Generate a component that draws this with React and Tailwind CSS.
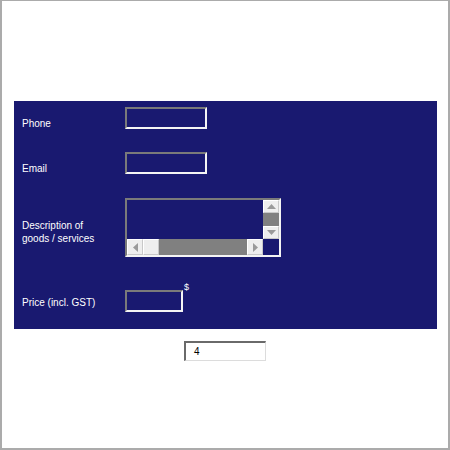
import React from 'react';

const font = { fontFamily: '"Liberation Sans", Arial, sans-serif' };

function Arrow({ dir }) {
    const pts = {
        up: '0,6 4.5,1 9,6',
        down: '0,1 4.5,6 9,1',
        left: '6,0 1,4.5 6,9',
        right: '1,0 6,4.5 1,9',
    }[dir];
    const w = dir === 'up' || dir === 'down' ? 9 : 7;
    const h = dir === 'up' || dir === 'down' ? 7 : 9;
    return (
        <svg width={w} height={h} viewBox={`0 0 ${w} ${h}`}>
            <polygon points={pts} fill="#9a9a9a" />
        </svg>
    );
}

function ScrollButton({ dir, className }) {
    return (
        <div className={"flex items-center justify-center bg-[#eeeeee] border border-t-white border-l-white border-b-[#c8c8c8] border-r-[#c8c8c8] " + className}>
            <Arrow dir={dir} />
        </div>
    );
}

function Field({ className }) {
    return (
        <div className={"border-2 border-t-[#7a7a7a] border-l-[#7a7a7a] border-b-[#f4f4f4] border-r-[#f4f4f4] " + className} />
    );
}

export default function App() {
    return (
        <div className="w-[450px] h-[450px] bg-white border-l-2 border-t border-r-2 border-b-2 border-[#ababab] overflow-hidden" style={font}>
            <div className="ml-[12px] mt-[100px] w-[423px] h-[228px] bg-[#191970] pl-[8px] pt-[6px] text-white text-[10px] leading-[13px]">
                <div className="flex h-[22px]">
                    <div className="w-[103px] pt-[10px]">Phone</div>
                    <Field className="w-[82px] h-[22px]" />
                </div>

                <div className="flex h-[22px] mt-[23px]">
                    <div className="w-[103px] pt-[10px]">Email</div>
                    <Field className="w-[82px] h-[22px]" />
                </div>

                <div className="flex h-[59px] mt-[24px]">
                    <div className="w-[103px] pt-[21px]">
                        <p>Description of</p>
                        <p>goods / services</p>
                    </div>
                    <div className="w-[156px] h-[59px] border-2 border-t-[#7a7a7a] border-l-[#7a7a7a] border-b-[#f4f4f4] border-r-[#f4f4f4] flex flex-col">
                        <div className="flex h-[39px]">
                            <div className="w-[136px]" />
                            <div className="w-[16px] flex flex-col">
                                <ScrollButton dir="up" className="h-[13px]" />
                                <div className="h-[13px] bg-[#808080]" />
                                <ScrollButton dir="down" className="h-[13px]" />
                            </div>
                        </div>
                        <div className="flex h-[16px]">
                            <ScrollButton dir="left" className="w-[16px]" />
                            <div className="w-[16px] bg-[#eeeeee] border border-t-white border-l-white border-b-[#c8c8c8] border-r-[#c8c8c8]" />
                            <div className="w-[88px] bg-[#808080]" />
                            <ScrollButton dir="right" className="w-[16px]" />
                            <div className="w-[16px]" />
                        </div>
                    </div>
                </div>

                <div className="flex h-[22px] mt-[33px]">
                    <div className="w-[103px] pt-[6px]">Price (incl. GST)</div>
                    <Field className="w-[58px] h-[22px]" />
                    <span className="text-[9px] leading-[9px] -mt-[7px] ml-[1px]">$</span>
                </div>
            </div>

            <div className="flex justify-center mt-[12px]">
                <div className="w-[82px] h-[20px] bg-white border-t-2 border-l-2 border-r border-b border-t-[#6a6a6a] border-l-[#6a6a6a] border-r-[#dcdcdc] border-b-[#dcdcdc] pl-[8px] text-[10px] leading-[17px] text-black">
                    4
                </div>
            </div>
        </div>
    );
}
